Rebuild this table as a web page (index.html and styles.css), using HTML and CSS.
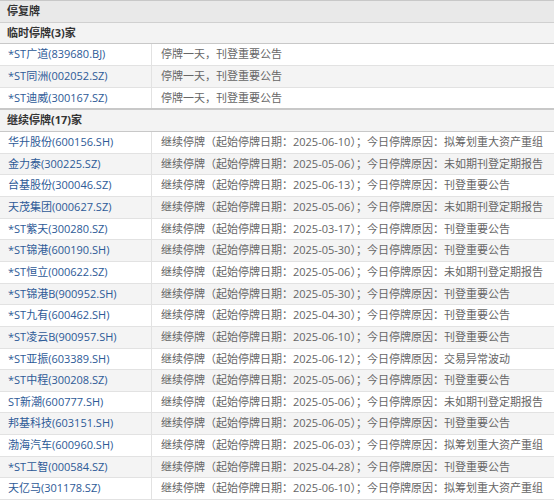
FILE: index.html
```html
<!DOCTYPE html>
<html lang="zh-CN">
<head>
<meta charset="utf-8">
<title>停复牌</title>
<link rel="stylesheet" href="styles.css">
</head>
<body>
<div class="board">
  <div class="title">停复牌</div>
  <div class="section">临时停牌(3)家</div>
  <div class="row"><div class="name">*ST广道(839680.BJ)</div><div class="info">停牌一天，刊登重要公告</div></div>
  <div class="row zebra"><div class="name">*ST同洲(002052.SZ)</div><div class="info">停牌一天，刊登重要公告</div></div>
  <div class="row last"><div class="name">*ST迪威(300167.SZ)</div><div class="info">停牌一天，刊登重要公告</div></div>
  <div class="section">继续停牌(17)家</div>
  <div class="row"><div class="name">华升股份(600156.SH)</div><div class="info">继续停牌（起始停牌日期：2025-06-10）；今日停牌原因：拟筹划重大资产重组</div></div>
  <div class="row zebra"><div class="name">金力泰(300225.SZ)</div><div class="info">继续停牌（起始停牌日期：2025-05-06）；今日停牌原因：未如期刊登定期报告</div></div>
  <div class="row"><div class="name">台基股份(300046.SZ)</div><div class="info">继续停牌（起始停牌日期：2025-06-13）；今日停牌原因：刊登重要公告</div></div>
  <div class="row zebra"><div class="name">天茂集团(000627.SZ)</div><div class="info">继续停牌（起始停牌日期：2025-05-06）；今日停牌原因：未如期刊登定期报告</div></div>
  <div class="row"><div class="name">*ST紫天(300280.SZ)</div><div class="info">继续停牌（起始停牌日期：2025-03-17）；今日停牌原因：刊登重要公告</div></div>
  <div class="row zebra"><div class="name">*ST锦港(600190.SH)</div><div class="info">继续停牌（起始停牌日期：2025-05-30）；今日停牌原因：刊登重要公告</div></div>
  <div class="row"><div class="name">*ST恒立(000622.SZ)</div><div class="info">继续停牌（起始停牌日期：2025-05-06）；今日停牌原因：未如期刊登定期报告</div></div>
  <div class="row zebra"><div class="name">*ST锦港B(900952.SH)</div><div class="info">继续停牌（起始停牌日期：2025-05-30）；今日停牌原因：刊登重要公告</div></div>
  <div class="row"><div class="name">*ST九有(600462.SH)</div><div class="info">继续停牌（起始停牌日期：2025-04-30）；今日停牌原因：刊登重要公告</div></div>
  <div class="row zebra"><div class="name">*ST凌云B(900957.SH)</div><div class="info">继续停牌（起始停牌日期：2025-06-10）；今日停牌原因：刊登重要公告</div></div>
  <div class="row"><div class="name">*ST亚振(603389.SH)</div><div class="info">继续停牌（起始停牌日期：2025-06-12）；今日停牌原因：交易异常波动</div></div>
  <div class="row zebra"><div class="name">*ST中程(300208.SZ)</div><div class="info">继续停牌（起始停牌日期：2025-05-06）；今日停牌原因：刊登重要公告</div></div>
  <div class="row"><div class="name">ST新潮(600777.SH)</div><div class="info">继续停牌（起始停牌日期：2025-05-06）；今日停牌原因：未如期刊登定期报告</div></div>
  <div class="row zebra"><div class="name">邦基科技(603151.SH)</div><div class="info">继续停牌（起始停牌日期：2025-06-05）；今日停牌原因：刊登重要公告</div></div>
  <div class="row"><div class="name">渤海汽车(600960.SH)</div><div class="info">继续停牌（起始停牌日期：2025-06-03）；今日停牌原因：拟筹划重大资产重组</div></div>
  <div class="row zebra"><div class="name">*ST工智(000584.SZ)</div><div class="info">继续停牌（起始停牌日期：2025-04-28）；今日停牌原因：刊登重要公告</div></div>
  <div class="row"><div class="name">天亿马(301178.SZ)</div><div class="info">继续停牌（起始停牌日期：2025-06-10）；今日停牌原因：拟筹划重大资产重组</div></div>
</div>
</body>
</html>
```
FILE: styles.css
```css
html, body {
  margin: 0;
  padding: 0;
  background: #ffffff;
}
.board {
  width: 554px;
  font-family: "Open Sans", "Noto Sans CJK SC", sans-serif;
  font-size: 11px;
  border-top: 1px solid #c8c8c8;
}
.title {
  height: 20.67px;
  line-height: 20.67px;
  padding-left: 7px;
  background: #e9e9e9;
  color: #333333;
  font-weight: 600;
  border-bottom: 1px solid #d0d0d0;
}
.section {
  height: 20.67px;
  line-height: 20.67px;
  padding-left: 7px;
  background: #f3f3f3;
  color: #333333;
  font-weight: 700;
  border-bottom: 1px solid #c8c8c8;
}
.row {
  display: grid;
  grid-template-columns: 152px 1fr;
  height: 20.67px;
  line-height: 20.67px;
  border-bottom: 1px solid #e2e2e2;
  white-space: nowrap;
  background: #ffffff;
}
.row.zebra {
  background: #f4f4f4;
}
.row.last {
  border-bottom: 2px solid #c8c8c8;
}
.name {
  padding-left: 8px;
  color: #2d5a97;
  border-right: 1px solid #e2e2e2;
  overflow: hidden;
}
.info {
  padding-left: 9px;
  color: #666666;
  overflow: hidden;
}
```
